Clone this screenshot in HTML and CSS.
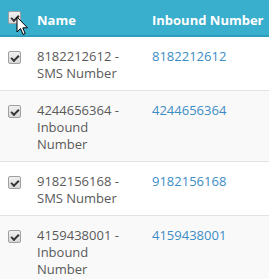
FILE: index.html
```html
<!DOCTYPE html>
<html>
<head>
<meta charset="utf-8">
<link rel="stylesheet" href="styles.css">
</head>
<body>
<table class="grid">
  <colgroup>
    <col class="c-check">
    <col class="c-name">
    <col class="c-num">
  </colgroup>
  <thead>
    <tr>
      <th class="cell-check"><span class="cb"></span></th>
      <th>Name</th>
      <th class="h-num">Inbound Number</th>
    </tr>
  </thead>
  <tbody>
    <tr>
      <td class="cell-check"><span class="cb"></span></td>
      <td class="name">8182212612 - SMS Number</td>
      <td class="num">8182212612</td>
    </tr>
    <tr class="alt">
      <td class="cell-check"><span class="cb"></span></td>
      <td class="name">4244656364 - Inbound Number</td>
      <td class="num">4244656364</td>
    </tr>
    <tr>
      <td class="cell-check"><span class="cb"></span></td>
      <td class="name">9182156168 - SMS Number</td>
      <td class="num">9182156168</td>
    </tr>
    <tr class="alt">
      <td class="cell-check"><span class="cb"></span></td>
      <td class="name">4159438001 - Inbound Number</td>
      <td class="num">4159438001</td>
    </tr>
  </tbody>
</table>
<svg class="cursor" width="13" height="21" viewBox="0 0 13 21">
  <path d="M1 1 L1 16 L4.5 12.5 L7 18.5 L9.2 17.6 L6.8 11.8 L11.5 11.8 Z" fill="#fff" stroke="#000" stroke-width="1" stroke-linejoin="round"/>
</svg>
</body>
</html>
```
FILE: styles.css
```css
html, body {
  margin: 0;
  padding: 0;
  background: #fff;
}
body {
  font-family: "Open Sans", "Liberation Sans", sans-serif;
  font-size: 13px;
  line-height: 17px;
  color: #555;
  position: relative;
  overflow: hidden;
}
.grid {
  border-collapse: collapse;
  table-layout: fixed;
  width: 269px;
}
.c-check { width: 29px; }
.c-name { width: 115px; }
.c-num { width: 125px; }
.grid th {
  box-sizing: border-box;
  background: #3aaecd;
  color: #fff;
  font-weight: bold;
  text-align: left;
  white-space: nowrap;
  height: 36px;
  padding: 5px 8px 0 8px;
  border-bottom: 2px solid #2d9dbc;
  vertical-align: middle;
}
.grid th.h-num { padding-right: 0; }
.grid td {
  padding: 11px 15px 8px 8px;
  vertical-align: top;
  border-top: 1px solid #e2e2e2;
}
.grid thead + tbody tr:first-child td { border-top: 0; }
.grid td.cell-check, .grid th.cell-check {
  padding: 0 0 0 8px;
}
.grid td.cell-check { padding-top: 14px; }
.grid th.cell-check { padding-top: 0; }
.grid td.num { padding-right: 8px; }
.alt td { background: #f9f9f9; }
.num { color: #3c8dc5; }
.name { color: #5a5a5a; }
.cb {
  display: block;
  box-sizing: border-box;
  width: 13px;
  height: 13px;
  border: 1px solid #a0a0a0;
  border-radius: 2px;
  background: linear-gradient(#f0f0f0, #d8d8d8);
  position: relative;
}
.cb::after {
  content: "";
  position: absolute;
  left: 2px;
  top: 3px;
  width: 6px;
  height: 3px;
  border-left: 2px solid #333;
  border-bottom: 2px solid #333;
  transform: rotate(-45deg);
}
.cursor {
  position: absolute;
  left: 16px;
  top: 16px;
}
```
